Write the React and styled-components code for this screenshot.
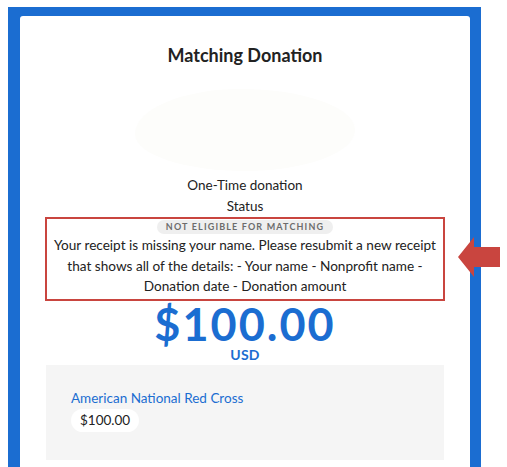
import React from 'react';
import styled, { createGlobalStyle } from 'styled-components';

const blue = '#1b6dd1';
const red = '#c9453f';

const GlobalStyle = createGlobalStyle`
    body {
        margin: 0;
        background: #ffffff;
        font-family: Lato, "Noto Sans", sans-serif;
        color: #222;
    }
`;

const Page = styled.div`
    position: relative;
    height: 467px;
    overflow: hidden;
    padding: 7px 0 0 8px;
    box-sizing: border-box;
`;

const Frame = styled.div`
    width: 473px;
    height: 480px;
    background: ${blue};
    padding: 9px 11px 0 12px;
    box-sizing: border-box;
`;

const Card = styled.div`
    background: #fff;
    border-radius: 3px;
    height: 100%;
    display: flex;
    flex-direction: column;
    align-items: center;
    padding-top: 29px;
    box-sizing: border-box;
`;

const Title = styled.h1`
    margin: 0;
    font-size: 18px;
    font-weight: 700;
    color: #222;
    line-height: 20px;
`;

const Blob = styled.div`
    width: 220px;
    height: 82px;
    margin-top: 24px;
    border-radius: 48% 52% 50% 50% / 55% 50% 50% 45%;
    background: #fdfdfb;
`;

const Line = styled.div`
    font-size: 13.5px;
    line-height: 20px;
    color: #222;
    margin-top: ${props => props.top || 0}px;
`;

const Notice = styled.div`
    width: 400px;
    box-sizing: border-box;
    border: 2px solid ${red};
    margin-top: 1px;
    padding: 1px 4px 2px;
    display: flex;
    flex-direction: column;
    align-items: center;
`;

const Badge = styled.span`
    background: #efefef;
    border-radius: 8px;
    padding: 0 9px;
    font-size: 9px;
    line-height: 14px;
    letter-spacing: 1.15px;
    font-weight: 700;
    color: #6c6c6c;
`;

const Message = styled.p`
    margin: 1px 0 0;
    text-align: center;
    font-size: 13.6px;
    line-height: 20.5px;
    color: #222;
`;

const Amount = styled.div`
    font-size: 45px;
    font-weight: 700;
    letter-spacing: 2px;
    color: ${blue};
    line-height: 46px;
    margin-top: 0;
`;

const Currency = styled.div`
    font-size: 14px;
    font-weight: 700;
    letter-spacing: 0.3px;
    color: ${blue};
    line-height: 16px;
`;

const Panel = styled.div`
    align-self: stretch;
    margin: 2px 26px 0 26px;
    height: 95px;
    background: #f5f5f5;
    padding: 25px 25px 0;
    box-sizing: border-box;
`;

const Org = styled.div`
    font-size: 13.5px;
    color: ${blue};
    line-height: 17px;
`;

const Pill = styled.span`
    display: inline-block;
    margin-top: 2px;
    background: #fff;
    border-radius: 12px;
    padding: 0 9px;
    font-size: 13.5px;
    line-height: 23px;
    color: #222;
`;

const Arrow = styled.svg`
    position: absolute;
    left: 458px;
    top: 237px;
`;

export default function App() {
    return (
        <Page>
            <GlobalStyle />
            <Frame>
                <Card>
                    <Title>Matching Donation</Title>
                    <Blob />
                    <Line top={4}>One-Time donation</Line>
                    <Line top={1}>Status</Line>
                    <Notice>
                        <Badge>NOT ELIGIBLE FOR MATCHING</Badge>
                        <Message>
                            Your receipt is missing your name. Please resubmit a new receipt that shows all of the details: - Your name - Nonprofit name - Donation date - Donation amount
                        </Message>
                    </Notice>
                    <Amount>$100.00</Amount>
                    <Currency>USD</Currency>
                    <Panel>
                        <Org>American National Red Cross</Org>
                        <Pill>$100.00</Pill>
                    </Panel>
                </Card>
            </Frame>
            <Arrow width="42" height="40" viewBox="0 0 42 40">
                <polygon points="0,20 16,0 16,10 42,10 42,30 16,30 16,40" fill={red} />
            </Arrow>
        </Page>
    );
}
